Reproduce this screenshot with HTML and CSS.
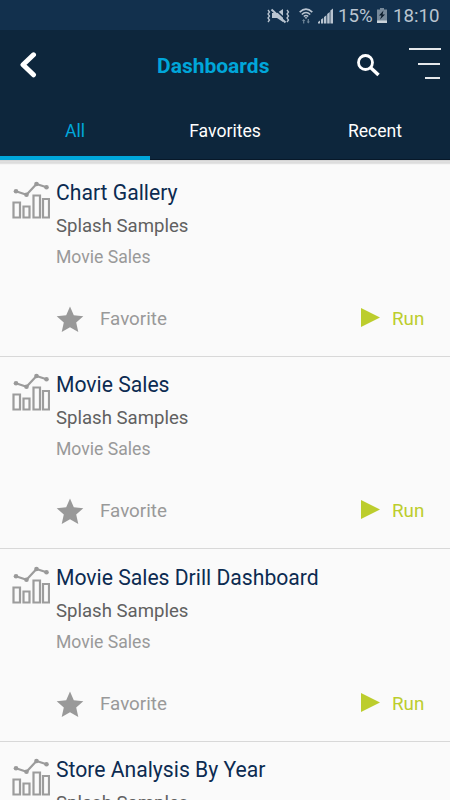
FILE: index.html
```html
<!DOCTYPE html>
<html lang="en">
<head>
<meta charset="utf-8">
<title>Dashboards</title>
<link rel="stylesheet" href="styles.css">
</head>
<body>
<svg class="defs" width="0" height="0">
  <symbol id="chart" viewBox="0 0 38 39">
    <g fill="none" stroke="#9c9c9c" stroke-width="2.200">
      <path d="M4 10.300 14.500 13.800 24.500 3 34.500 6.300"/>
      <path d="M1.500 21.500h6.500v15H1.500zM11.500 25.500h6v11h-6zM21.500 14.500h6.500v22h-6.500zM31 18h6v18.500h-6z"/>
    </g>
    <g fill="#999"><circle cx="4" cy="10.300" r="2.300"/><circle cx="14.500" cy="13.800" r="2.300"/><circle cx="24.500" cy="3" r="2.300"/><circle cx="34.500" cy="6.300" r="2.300"/></g>
  </symbol>
  <symbol id="star" viewBox="0 0 28 27"><path fill="#999" d="M14 .5 17.800 9.300 27.300 10.200 20.200 16.500 22.300 26 14 21.200 5.700 26 7.800 16.500.7 10.200 10.200 9.300z"/></symbol>
  <symbol id="play" viewBox="0 0 19 19"><path fill="#bccd2d" d="M0 0 19 9.500 0 19z"/></symbol>
</svg>
<div class="statusbar">
  <svg class="mute" width="23" height="16" viewBox="0 0 23 16">
    <path fill="#b9c4d0" d="M5 5h5l6-4v13l-6-4H5z"/>
    <path stroke="#12304d" stroke-width="1.500" d="M6.500 0 20 12.500"/>
    <path stroke="#b9c4d0" stroke-width="2" d="M4.500 1.500 18.500 14.500"/>
    <path fill="none" stroke="#b9c4d0" stroke-width="1.300" d="M1 2l1.500 2L1 6l1.500 2L1 10l1.500 2L1 14M20 2l1.500 2L20 6l1.500 2L20 10l1.500 2L20 14"/>
  </svg>
  <svg class="wifi" width="14" height="16" viewBox="0 0 14 16">
    <g fill="none" stroke="#b9c4d0" stroke-width="1.600"><path d="M.7 4.200Q7-1.800 13.300 4.200M2.800 6.500Q7 2.500 11.200 6.500M4.800 8.500Q7 6.500 9.200 8.500"/></g>
    <path fill="#b9c4d0" d="M5.500 9.200h3L7 11z"/>
    <path fill="#71879a" d="M3 13 4.700 11 6.400 13H5.300v2.500H4.100V13zM7.600 13.500h1.100V11h1.200v2.500H11l-1.700 2z"/>
  </svg>
  <svg class="signal" width="15" height="16" viewBox="0 0 15 16"><path fill="#b9c4d0" d="M0 15.500V14L2 12.500v3zM3 15.500V11.500L5.200 10v5.500zM6 15.500V9L8.400 7.200v8.300zM9.200 15.500V6L11.700 4v11.500zM12.400 15.500V2.500L15 .5v15z"/></svg>
  <span class="percent">15%</span>
  <svg class="battery" width="10" height="15" viewBox="0 0 10 15"><path fill="#77899a" d="M0 1.500h3V0h4v1.500h3V15H0z"/><path fill="#cbd3da" d="M0 12.500h10V15H0z"/><path fill="#0b1c2c" d="M6.500 2.500 2 7.500h2.500L3 11.500l5-5H5.500z"/></svg>
  <span class="clock">18:10</span>
</div>
<header class="appbar">
  <svg class="back" width="18" height="28" viewBox="0 0 18 28"><path fill="none" stroke="#fff" stroke-width="5" stroke-linecap="round" stroke-linejoin="round" d="M14.500 3.800 4 13.800 14.500 23.800"/></svg>
  <h1>Dashboards</h1>
  <svg class="search" width="24" height="24" viewBox="0 0 24 24"><g fill="none" stroke="#fff" stroke-width="2.800"><circle cx="8.500" cy="8.500" r="7"/><path stroke-width="3.400" d="M13.500 13.500 21.500 21"/></g></svg>
  <svg class="menu" width="32" height="32" viewBox="0 0 32 32"><path fill="#e4e8eb" d="M0 0h32v2H0zM9 15h22v2H9zM16 29h15v2H16z"/></svg>
</header>
<nav class="tabs">
  <div class="tab active">All</div><div class="tab">Favorites</div><div class="tab">Recent</div>
</nav>
<main class="list">
  <article class="item">
    <svg class="chart"><use href="#chart"/></svg>
    <div class="body">
      <h2>Chart Gallery</h2><p class="source">Splash Samples</p><p class="data">Movie Sales</p>
      <div class="actions"><svg class="star"><use href="#star"/></svg><span class="favorite">Favorite</span><svg class="play"><use href="#play"/></svg><span class="run">Run</span></div>
    </div>
  </article>
  <article class="item">
    <svg class="chart"><use href="#chart"/></svg>
    <div class="body">
      <h2>Movie Sales</h2><p class="source">Splash Samples</p><p class="data">Movie Sales</p>
      <div class="actions"><svg class="star"><use href="#star"/></svg><span class="favorite">Favorite</span><svg class="play"><use href="#play"/></svg><span class="run">Run</span></div>
    </div>
  </article>
  <article class="item">
    <svg class="chart"><use href="#chart"/></svg>
    <div class="body">
      <h2>Movie Sales Drill Dashboard</h2><p class="source">Splash Samples</p><p class="data">Movie Sales</p>
      <div class="actions"><svg class="star"><use href="#star"/></svg><span class="favorite">Favorite</span><svg class="play"><use href="#play"/></svg><span class="run">Run</span></div>
    </div>
  </article>
  <article class="item">
    <svg class="chart"><use href="#chart"/></svg>
    <div class="body">
      <h2>Store Analysis By Year</h2><p class="source">Splash Samples</p>
    </div>
  </article>
</main>
</body>
</html>
```
FILE: styles.css
```css
* { box-sizing: border-box; margin: 0; padding: 0; }
html, body { height: 800px; overflow: hidden; }
body { display: flex; flex-direction: column; background: #fafafa; font-family: Roboto, "Liberation Sans", sans-serif; }
svg { display: block; flex: none; }
.defs { display: none; }
.statusbar { flex: none; height: 30px; background: #12304d; display: flex; align-items: center; padding: 1px 0 0 267px; color: #b9c4d0; font-size: 18.700px; line-height: 30px; white-space: nowrap; }
.wifi { margin-left: 9px; }
.signal { margin-left: 5px; }
.percent { width: 37px; margin-left: 5px; }
.battery { margin-left: 2px; }
.clock { margin-left: 6px; }
.appbar { flex: none; height: 72px; background: #0d263c; display: flex; align-items: flex-start; padding: 18px 9px 0 19px; }
.back { margin-top: 3px; }
h1 { width: 116px; margin-left: 120px; color: #00a6da; font-size: 21px; font-weight: 700; line-height: 36px; white-space: nowrap; }
.search { margin: 6px 0 0 84px; }
.menu { margin-left: 28px; }
.tabs { flex: none; height: 58px; display: grid; grid-template-columns: repeat(3, 1fr); background: #0d263c; border-bottom: 1px solid #071829; }
.tab { height: 58px; line-height: 59px; text-align: center; color: #fff; font-size: 17.600px; }
.active { color: #00a6da; border-bottom: 4px solid #00a6da; }
.list { background: linear-gradient(#d0d0d0, #e4e4e4 2px, #d4d4d4 3px, #f0f0f0 4px, #fafafa 5px); padding-top: 4px; overflow: hidden; flex: 1; }
.item { height: 192.500px; display: flex; padding: 16.500px 25px 0 12px; border-bottom: 1px solid #d8d8d8; }
.chart { width: 38px; height: 39px; }
.body { flex: 1; padding-left: 6px; white-space: nowrap; }
h2 { margin-top: -1px; font-size: 21.150px; font-weight: 400; line-height: 26px; color: #0c2b51; }
.source { margin-top: 8px; font-size: 18.600px; line-height: 24px; color: #606060; }
.data { margin-top: 8px; font-size: 17.600px; line-height: 22px; color: #999; }
.actions { margin-top: 37px; height: 28px; display: flex; align-items: center; }
.star { width: 28px; height: 27px; margin: 1px 0 0 -.500px; }
.favorite { margin-left: 16.500px; font-size: 18.800px; color: #999; }
.play { width: 19px; height: 19px; margin: -3px 0 0 auto; }
.run { width: 33px; margin-left: 12px; font-size: 18.800px; color: #bccd2d; }
```
